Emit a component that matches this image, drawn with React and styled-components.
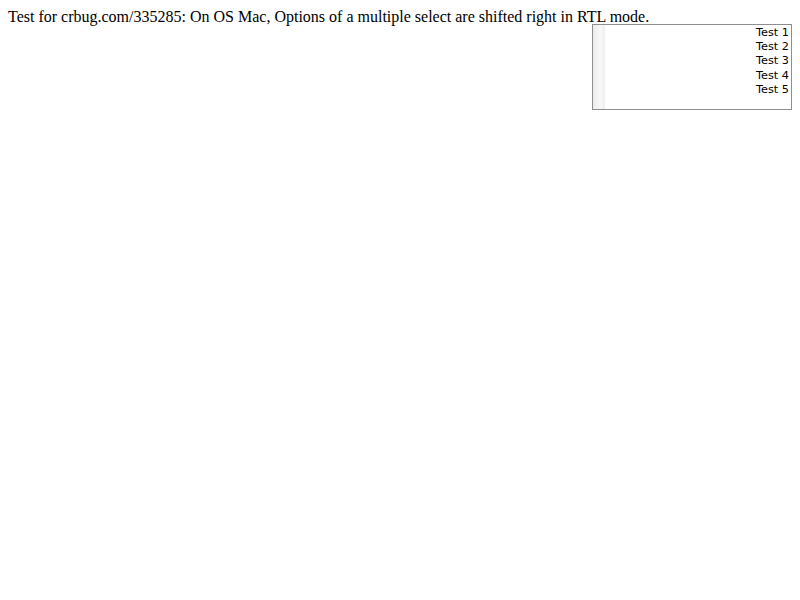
import React from "react";
import styled, { createGlobalStyle } from "styled-components";

const Global = createGlobalStyle`
  html, body { margin: 0; padding: 0; background: #fff; }
  body { padding: 8px; font-family: "Liberation Serif", "Times New Roman", serif; font-size: 16px; color: #000; }
`;

const Title = styled.div`
  height: 16px;
  line-height: 18px;
  white-space: nowrap;
`;

const Row = styled.div`
  display: flex;
  justify-content: flex-end;
`;

const ListBox = styled.div`
  width: 200px;
  height: 86px;
  box-sizing: border-box;
  border: 1px solid #8e8e8e;
  display: flex;
  flex-direction: row;
  direction: rtl;
  background: #fff;
`;

const Options = styled.div`
  flex: 1;
  display: flex;
  flex-direction: column;
  padding-top: 1px;
  padding-right: 2px;
  font-family: "DejaVu Sans", "Liberation Sans", sans-serif;
  font-size: 11.3px;
  color: #000;
  text-align: right;
`;

const Option = styled.div`
  height: 14.2px;
  line-height: 14px;
  unicode-bidi: plaintext;
`;

const Track = styled.div`
  width: 11px;
  height: 100%;
  background: linear-gradient(to right, #ececec 0%, #f4f4f4 45%, #f8f8f8 70%, #efefef 100%);
  border-right: 1px solid #f0f0f0;
`;

export default function App() {
  return (
    <>
      <Global />
      <Title>Test for crbug.com/335285: On OS Mac, Options of a multiple select are shifted right in RTL mode.</Title>
      <Row>
        <ListBox>
          <Options>
            {["Test 1", "Test 2", "Test 3", "Test 4", "Test 5"].map((t) => (
              <Option key={t}>{t}</Option>
            ))}
          </Options>
          <Track />
        </ListBox>
      </Row>
    </>
  );
}
